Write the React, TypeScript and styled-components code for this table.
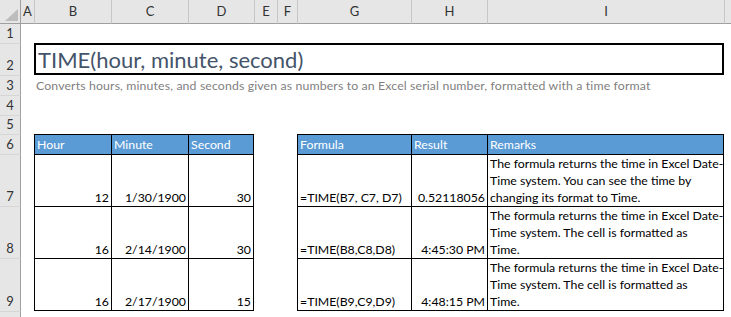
import React from "react";
import styled, { createGlobalStyle } from "styled-components";

const GlobalStyle = createGlobalStyle`
  html, body {
    margin: 0;
    padding: 0;
    background: #ffffff;
  }
  body {
    overflow: hidden;
    font-family: Lato, "Liberation Sans", sans-serif;
  }
`;

const CELL_FONT = `Lato, "Liberation Sans", sans-serif`;

// Sheet geometry: row-header column, columns A..I, then the rest of the window.
const COL_WIDTHS = [21, 13, 77, 77, 66, 23, 20, 114, 76, 237];
const COL_LETTERS = ["A", "B", "C", "D", "E", "F", "G", "H", "I"];
// Column-header strip, then rows 1..10.
const ROW_HEIGHTS = [24, 19, 32, 20, 20, 19, 20, 52, 52, 53, 20];

const Sheet = styled.div`
  display: grid;
  grid-template-columns: ${COL_WIDTHS.map((w) => `${w}px`).join(" ")} 1fr;
  grid-template-rows: ${ROW_HEIGHTS.map((h) => `${h}px`).join(" ")};
  width: 731px;
  height: 317px;
  overflow: hidden;
  background: #ffffff;
  font-family: ${CELL_FONT};
  font-size: 12.3px;
  color: #000000;
`;

const Corner = styled.div`
  grid-column: 1;
  grid-row: 1;
  background: #e6e6e6;
  border-right: 1px solid #9f9f9f;
  border-bottom: 1px solid #9f9f9f;
  display: flex;
  align-items: flex-end;
  justify-content: flex-end;
  padding: 0 2px 2px 0;
`;

const ColHeader = styled.div<{ $col: number; $first?: boolean }>`
  grid-column: ${(p) => p.$col};
  grid-row: 1;
  background: #e6e6e6;
  border-bottom: 1px solid #9f9f9f;
  border-left: ${(p) => (p.$first ? "none" : "1px solid #c6c6c6")};
  display: flex;
  align-items: flex-end;
  justify-content: center;
  padding-bottom: 3px;
  line-height: 17px;
  font-size: 13px;
  color: #333333;
`;

const RowHeader = styled.div<{ $row: number; $first?: boolean }>`
  grid-column: 1;
  grid-row: ${(p) => p.$row};
  background: #e6e6e6;
  border-right: 1px solid #9f9f9f;
  border-top: ${(p) => (p.$first ? "none" : "1px solid #d6d6d6")};
  display: flex;
  align-items: flex-end;
  justify-content: center;
  padding-bottom: 1px;
  line-height: 17px;
  font-size: 13px;
  color: #333333;
`;

const TitleBox = styled.div`
  grid-column: 3 / 11;
  grid-row: 3;
  border: 2px solid #000000;
  display: flex;
  align-items: flex-end;
  padding-left: 2px;
  font-size: 22px;
  font-weight: 400;
  line-height: 27px;
  color: #44546a;
  white-space: nowrap;
`;

const Subtitle = styled.div`
  grid-column: 3 / 12;
  grid-row: 4;
  display: flex;
  align-items: flex-end;
  padding: 0 0 1px 2px;
  line-height: 17px;
  letter-spacing: 0.13px;
  color: #7f7f7f;
  white-space: nowrap;
`;

const Table = styled.div<{ $col: string; $widths: number[] }>`
  grid-column: ${(p) => p.$col};
  grid-row: 7 / 11;
  display: grid;
  grid-template-columns: ${(p) => p.$widths.map((w) => `${w}px`).join(" ")};
  grid-template-rows: 20px 52px 52px 52px;
  border-left: 1px solid #000000;
  border-top: 1px solid #000000;
  align-self: start;
`;

const HeadCell = styled.div`
  background: #5b9bd5;
  color: #ffffff;
  border-right: 1px solid #000000;
  border-bottom: 1px solid #000000;
  display: flex;
  align-items: flex-end;
  padding: 0 2px 1px 2px;
  line-height: 17px;
  white-space: nowrap;
`;

const DataCell = styled.div<{ $align?: "left" | "right" }>`
  border-right: 1px solid #000000;
  border-bottom: 1px solid #000000;
  display: flex;
  flex-direction: column;
  justify-content: flex-end;
  align-items: ${(p) => (p.$align === "right" ? "flex-end" : "flex-start")};
  padding: 0 ${(p) => (p.$align === "right" ? "2px" : "0")} 0 2px;
  line-height: 17px;
  white-space: nowrap;
  overflow: hidden;
`;

const Line = styled.span`
  display: block;
`;

const hourRows: [string, string, string][] = [
  ["12", "1/30/1900", "30"],
  ["16", "2/14/1900", "30"],
  ["16", "2/17/1900", "15"],
];

const formulaRows: { formula: string; result: string; remarks: string[] }[] = [
  {
    formula: "=TIME(B7, C7, D7)",
    result: "0.52118056",
    remarks: [
      "The formula returns the time in Excel Date-",
      "Time system. You can see the time by",
      "changing its format to Time.",
    ],
  },
  {
    formula: "=TIME(B8,C8,D8)",
    result: "4:45:30 PM",
    remarks: [
      "The formula returns the time in Excel Date-",
      "Time system. The cell is formatted as",
      "Time.",
    ],
  },
  {
    formula: "=TIME(B9,C9,D9)",
    result: "4:48:15 PM",
    remarks: [
      "The formula returns the time in Excel Date-",
      "Time system. The cell is formatted as",
      "Time.",
    ],
  },
];

function CornerMark() {
  return (
    <svg width="13" height="12" viewBox="0 0 13 12">
      <polygon points="13,0 13,12 0,12" fill="#bdbdbd" />
    </svg>
  );
}

export default function App() {
  return (
    <>
      <GlobalStyle />
      <Sheet>
        <Corner>
          <CornerMark />
        </Corner>
        {COL_LETTERS.map((letter, i) => (
          <ColHeader key={letter} $col={i + 2} $first={i === 0}>
            {letter}
          </ColHeader>
        ))}
        <ColHeader $col={11} />

        {Array.from({ length: 10 }, (_, i) => (
          <RowHeader key={i} $row={i + 2} $first={i === 0}>
            {i < 9 ? i + 1 : null}
          </RowHeader>
        ))}

        <TitleBox>TIME(hour, minute, second)</TitleBox>
        <Subtitle>
          Converts hours, minutes, and seconds given as numbers to an Excel serial number, formatted with a time format
        </Subtitle>

        <Table $col="3 / 6" $widths={[77, 77, 65]}>
          <HeadCell>Hour</HeadCell>
          <HeadCell>Minute</HeadCell>
          <HeadCell>Second</HeadCell>
          {hourRows.map((row, r) =>
            row.map((value, c) => (
              <DataCell key={`${r}-${c}`} $align="right">
                {value}
              </DataCell>
            ))
          )}
        </Table>

        <Table $col="8 / 11" $widths={[114, 76, 236]}>
          <HeadCell>Formula</HeadCell>
          <HeadCell>Result</HeadCell>
          <HeadCell>Remarks</HeadCell>
          {formulaRows.map((row, r) => (
            <React.Fragment key={r}>
              <DataCell $align="left">{row.formula}</DataCell>
              <DataCell $align="right">{row.result}</DataCell>
              <DataCell $align="left">
                {row.remarks.map((line, k) => (
                  <Line key={k}>{line}</Line>
                ))}
              </DataCell>
            </React.Fragment>
          ))}
        </Table>
      </Sheet>
    </>
  );
}
